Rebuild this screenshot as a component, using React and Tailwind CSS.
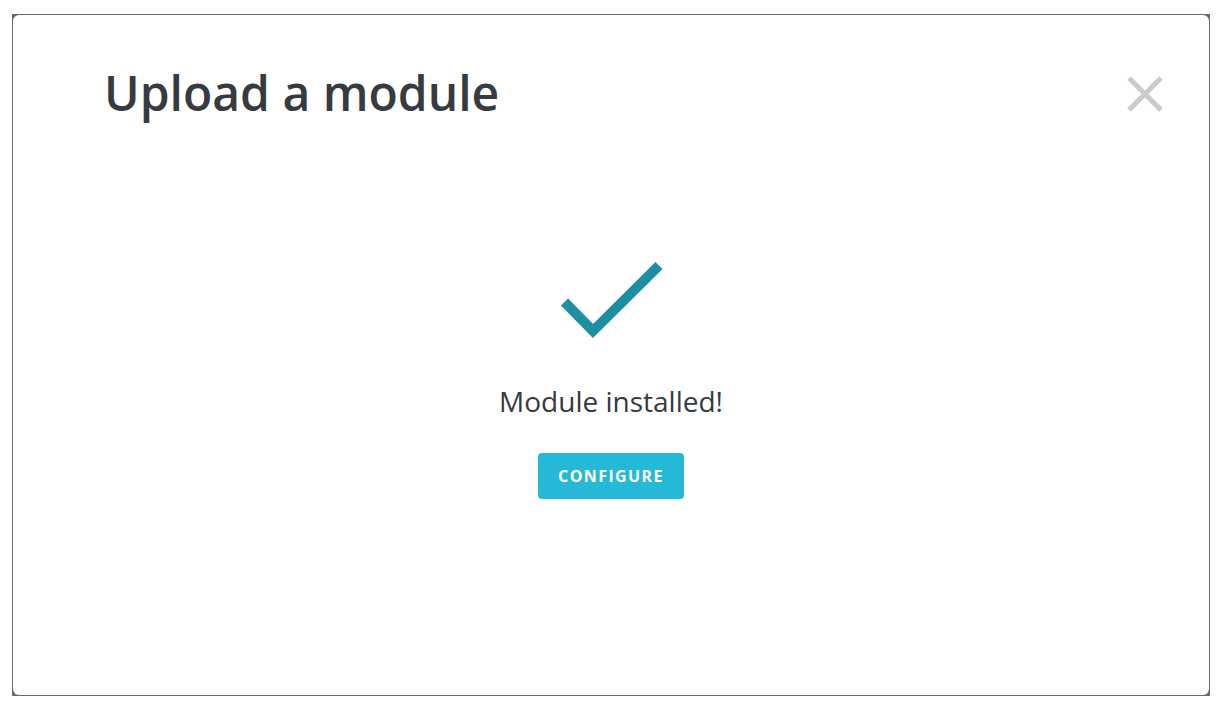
export default function App() {
  return (
    <div className="w-[1225px] h-[706px] bg-white pt-[14px] pl-[12px]" style={{ fontFamily: '"Open Sans", "Noto Sans", sans-serif' }}>
      <div className="w-[1198px] h-[682px] bg-[#6b6b6b] p-px">
        <div className="w-full h-full bg-white rounded-[6px] flex flex-col">
          {/* Header */}
          <div className="flex items-start justify-between pl-[91px] pr-[46px] pt-[48px]">
            <h1 className="text-[48px] leading-[60px] font-semibold text-[#363a41]">Upload a module</h1>
            <button className="mt-[13px] text-[#cbcbcb]">
              <svg width="36" height="36" viewBox="0 0 36 36">
                <path d="M2 2 L34 34 M34 2 L2 34" stroke="currentColor" strokeWidth="5" />
              </svg>
            </button>
          </div>

          {/* Body */}
          <div className="flex flex-col items-center pt-[135px]">
            <svg width="110" height="84" viewBox="0 0 110 84" className="mr-[1px]">
              <path d="M8.5 44 L37 73 L103 7.5" fill="none" stroke="#1e8ea3" strokeWidth="10" />
            </svg>
            <p className="mt-[40px] text-[28px] leading-[38px] text-[#363a41]">Module installed!</p>
            <button className="mt-[33px] w-[146px] h-[46px] rounded-[4px] bg-[#25b9d7] text-white text-[16px] font-bold tracking-[1.4px]">
              CONFIGURE
            </button>
          </div>
        </div>
      </div>
    </div>
  )
}
